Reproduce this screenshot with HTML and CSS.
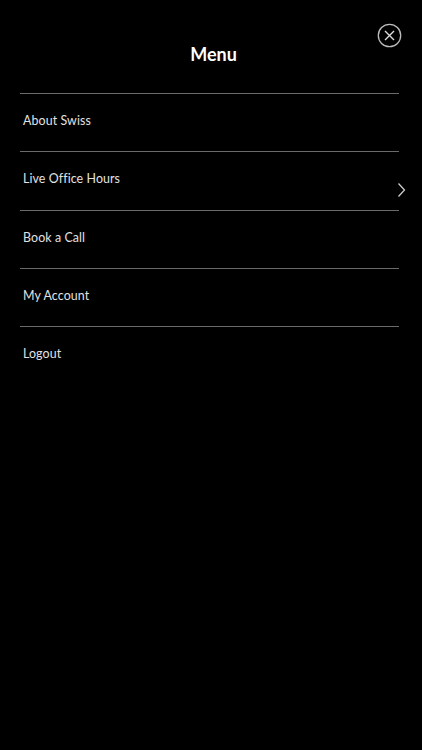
FILE: index.html
```html
<!DOCTYPE html>
<html lang="en">
<head>
    <meta charset="UTF-8">
    <meta name="viewport" content="width=device-width, initial-scale=1.0">
    <title>Menu</title>
    <link rel="stylesheet" href="styles.css">
</head>
<body>
    <header class="menu-header">
        <h1>Menu</h1>
        <button class="close-btn" aria-label="Close">
            <svg width="25" height="25" viewBox="0 0 25 25">
                <circle cx="12.5" cy="12.5" r="11.2" fill="none" stroke="#bbb" stroke-width="1.3"/>
                <path d="M8 8 L17 17 M17 8 L8 17" stroke="#ddd" stroke-width="1.4" fill="none"/>
            </svg>
        </button>
    </header>

    <ul class="menu-list">
        <li class="menu-item">About Swiss</li>
        <li class="menu-item">
            Live Office Hours
            <svg class="chevron" width="9" height="16" viewBox="0 0 9 16">
                <path d="M1.5 1.5 L7.5 8 L1.5 14.5" stroke="#ccc" stroke-width="1.3" fill="none"/>
            </svg>
        </li>
        <li class="menu-item">Book a Call</li>
        <li class="menu-item">My Account</li>
        <li class="menu-item">Logout</li>
    </ul>
</body>
</html>
```

FILE: styles.css
```css
body {
    margin: 0;
    background-color: #000;
    color: #e2e2e2;
    font-family: Lato, "Noto Sans", sans-serif;
    width: 422px;
    height: 750px;
}
.menu-header {
    position: relative;
    height: 93px;
    display: flex;
    align-items: flex-start;
    justify-content: center;
}
.menu-header h1 {
    margin: 42px 0 0 5px;
    font-size: 18px;
    font-weight: 700;
    color: #fff;
    line-height: 24px;
}
.close-btn {
    position: absolute;
    top: 23px;
    right: 20px;
    padding: 0;
    background: none;
    border: none;
    cursor: pointer;
    line-height: 0;
}
.menu-list {
    list-style: none;
    margin: 0 23px 0 20px;
    padding: 0;
}
.menu-item {
    position: relative;
    height: 58.3px;
    padding: 18px 0 0 3px;
    box-sizing: border-box;
    border-top: 1px solid #6a6a6a;
    font-size: 12.4px;
    letter-spacing: 0.1px;
    line-height: 18px;
}
.menu-item:last-child {
    height: auto;
}
.chevron {
    position: absolute;
    right: -7px;
    top: 30px;
}
```
